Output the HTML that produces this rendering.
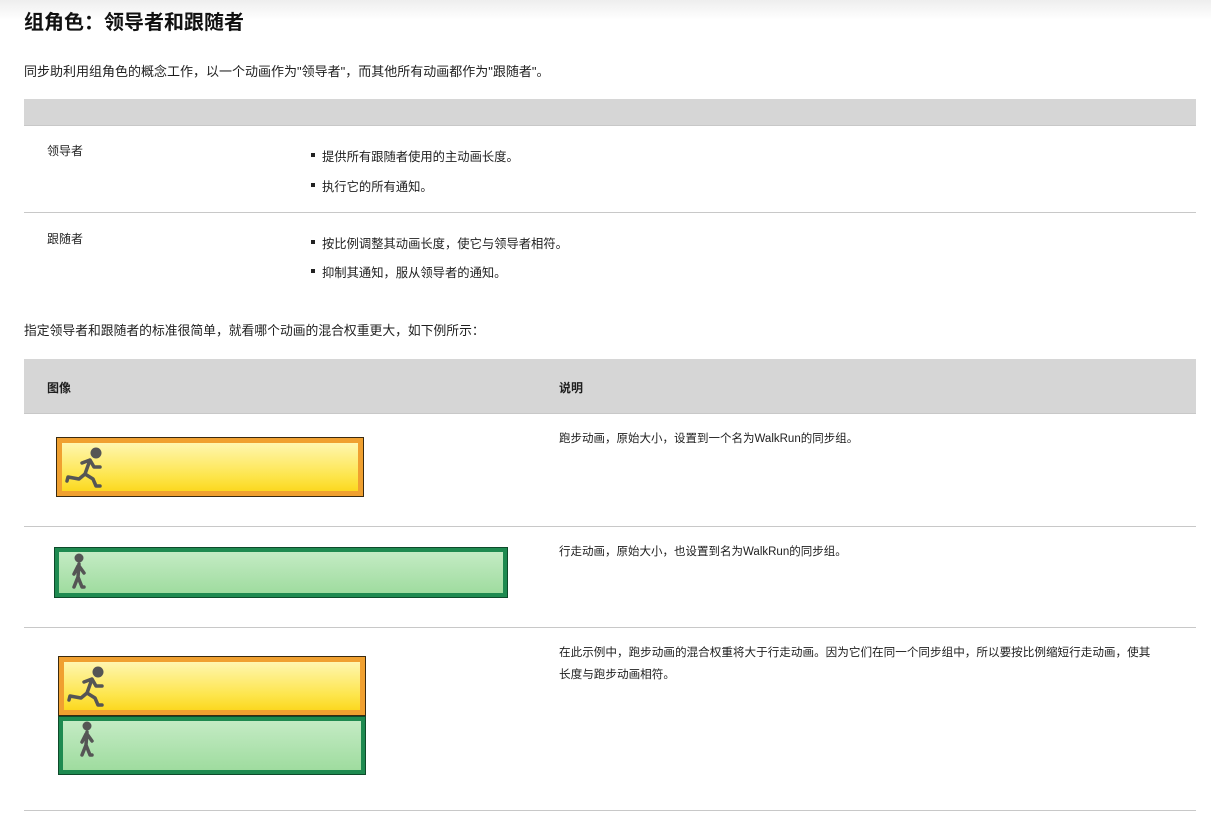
<!DOCTYPE html>
<html><head><meta charset="utf-8"><style>
body{margin:0;width:1211px;height:822px;background:#fff;font-family:"Liberation Sans","Noto Sans CJK SC",sans-serif;color:#1e1e1e;position:relative;overflow:hidden}
.a{position:absolute;white-space:nowrap}
.t{font-size:12px}
.line{position:absolute;left:24px;width:1172px;height:1px;background:#c8c8c8}
.gray{position:absolute;left:24px;width:1172px;background:#d6d6d6}
.b{position:absolute;width:4px;height:4px;background:#222}
.run{position:absolute;box-sizing:border-box;border:1px solid #3a2a10;background:#f0a030;padding:5px}
.run div{width:100%;height:100%;background:linear-gradient(#fff6b0,#fde54a 70%,#fbd820)}
.walk{position:absolute;box-sizing:border-box;border:1px solid #0d4a2a;background:#1e8a50;padding:4px}
.walk div{width:100%;height:100%;background:linear-gradient(#c4ebc4,#9fdc9f)}
svg{position:absolute}
</style></head><body>
<div style="position:absolute;left:0;top:0;width:1211px;height:20px;background:linear-gradient(#eee,#fff)"></div>
<div class="a" style="left:24px;top:6px;font-size:20px;font-weight:bold;color:#111">组角色：领导者和跟随者</div>
<div class="a t" style="left:24px;top:61px;font-size:13px">同步助利用组角色的概念工作，以一个动画作为"领导者"，而其他所有动画都作为"跟随者"。</div>
<div class="gray" style="top:99px;height:26px"></div>
<div class="line" style="top:125px"></div>
<div class="a t" style="left:47px;top:142px">领导者</div>
<div class="b" style="left:311px;top:153px"></div><div class="a t" style="left:322px;top:147px;font-size:12.3px">提供所有跟随者使用的主动画长度。</div>
<div class="b" style="left:311px;top:183px"></div><div class="a t" style="left:322px;top:177px;font-size:12.3px">执行它的所有通知。</div>
<div class="line" style="top:212px"></div>
<div class="a t" style="left:47px;top:230px">跟随者</div>
<div class="b" style="left:311px;top:240px"></div><div class="a t" style="left:322px;top:234px;font-size:12.3px">按比例调整其动画长度，使它与领导者相符。</div>
<div class="b" style="left:311px;top:269px"></div><div class="a t" style="left:322px;top:263px;font-size:12.3px">抑制其通知，服从领导者的通知。</div>
<div class="a t" style="left:24px;top:320px;font-size:12.8px">指定领导者和跟随者的标准很简单，就看哪个动画的混合权重更大，如下例所示：</div>
<div class="gray" style="top:359px;height:54px"></div>
<div class="line" style="top:413px"></div>
<div class="a t" style="left:47px;top:379px;font-weight:bold">图像</div>
<div class="a t" style="left:559px;top:379px;font-weight:bold">说明</div>
<div class="run" style="left:56px;top:437px;width:308px;height:60px"><div></div></div>
<div class="a t" style="left:559px;top:430px;font-size:11.5px">跑步动画，原始大小，设置到一个名为WalkRun的同步组。</div>
<div class="line" style="top:526px"></div>
<div class="walk" style="left:54px;top:547px;width:454px;height:51px"><div></div></div>
<div class="a t" style="left:559px;top:543px;font-size:11.5px">行走动画，原始大小，也设置到名为WalkRun的同步组。</div>
<div class="line" style="top:627px"></div>
<div class="run" style="left:58px;top:656px;width:308px;height:60px"><div></div></div>
<div class="walk" style="left:58px;top:716px;width:308px;height:59px"><div></div></div>
<div class="a t" style="left:559px;top:644px;font-size:11.6px">在此示例中，跑步动画的混合权重将大于行走动画。因为它们在同一个同步组中，所以要按比例缩短行走动画，使其</div>
<div class="a t" style="left:559px;top:666px;font-size:11.6px">长度与跑步动画相符。</div>
<div class="line" style="top:810px"></div>
<svg width="0" height="0"><defs>
<g id="r" fill="none" stroke="#555" stroke-width="3.5" stroke-linecap="round" stroke-linejoin="round"><circle cx="31" cy="7" r="5.5" fill="#555" stroke="none"/><path d="M25 14 L20 28 L28 33 L31 40 L35 40 M20 28 L14 33 L3 31 L2 35 M17 17 L25 14 L29 21 L35 21"/></g>
<g id="w" fill="none" stroke="#555" stroke-width="3.5" stroke-linecap="round" stroke-linejoin="round"><circle cx="10" cy="5" r="4.5" fill="#555" stroke="none"/><path d="M10 11 L9 24 L5 34 M9 24 L13 34 L15 34 M9 13 L5 21 M10 13 L15 20"/></g>
</defs></svg>
<svg style="left:65px;top:446px" width="42" height="44"><use href="#r"/></svg>
<svg style="left:67px;top:665px" width="42" height="44"><use href="#r"/></svg>
<svg style="left:69px;top:553px" width="20" height="38"><use href="#w"/></svg>
<svg style="left:77px;top:721px" width="20" height="38"><use href="#w"/></svg>
</body></html>
